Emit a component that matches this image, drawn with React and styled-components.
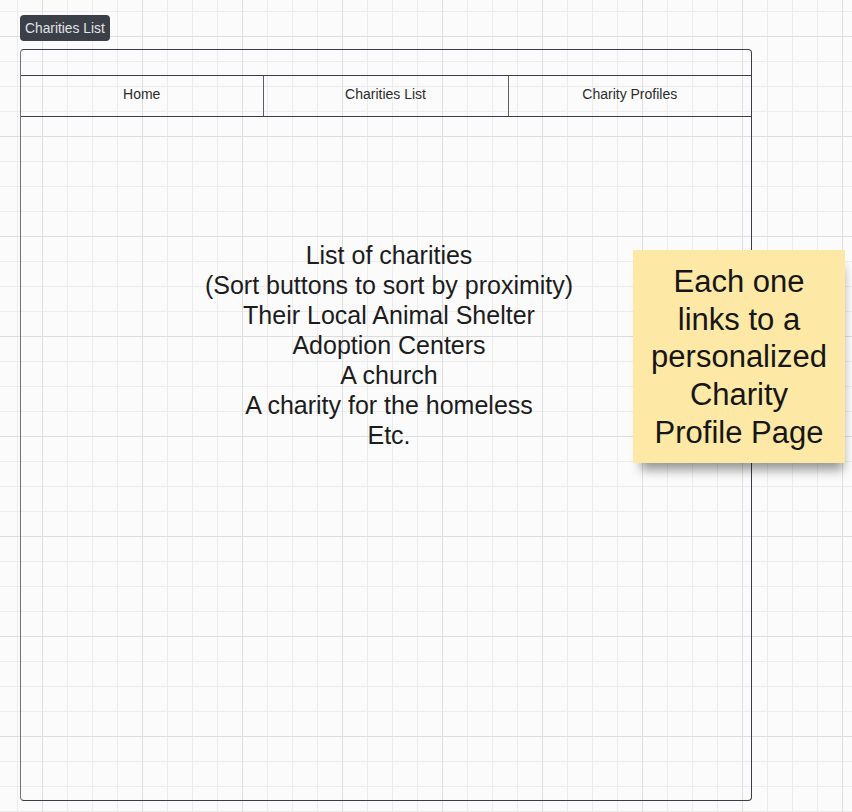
import * as React from 'react';
import styled, { createGlobalStyle } from 'styled-components';

const GlobalStyle = createGlobalStyle`
  html, body {
    margin: 0;
    padding: 0;
  }
  body {
    font-family: 'Liberation Sans', Arial, sans-serif;
    background-color: #fbfbfb;
    background-image:
      linear-gradient(to right, #dedede 1px, transparent 1px),
      linear-gradient(to bottom, #dedede 1px, transparent 1px),
      linear-gradient(to right, #ececec 1px, transparent 1px),
      linear-gradient(to bottom, #ececec 1px, transparent 1px);
    background-size: 100px 100px, 100px 100px, 25px 25px, 25px 25px;
    background-position: 42px 36px, 42px 36px, 17px 11px, 17px 11px;
  }
`;

const Canvas = styled.div`
  position: relative;
  width: 852px;
  height: 812px;
  padding: 15px 0 0 20px;
  box-sizing: border-box;
`;

const Tag = styled.div`
  display: inline-block;
  height: 26px;
  line-height: 28px;
  padding: 0 5px 0 5px;
  box-sizing: border-box;
  background: #3b3f48;
  color: #e2e3e5;
  font-size: 13.8px;
  border-radius: 4px;
`;

const Frame = styled.div`
  margin-top: 8px;
  width: 732px;
  height: 752px;
  box-sizing: border-box;
  border: 1.5px solid #3a3e48;
  border-left-color: #6f727a;
  border-radius: 4px;
  display: flex;
  flex-direction: column;
`;

const TitleBar = styled.div`
  height: 25px;
  border-bottom: 1.5px solid #3a3e48;
`;

const Nav = styled.div`
  display: grid;
  grid-template-columns: 241.5px 245px 1fr;
  height: 40px;
  border-bottom: 1.5px solid #3a3e48;
`;

const NavItem = styled.div`
  display: flex;
  align-items: center;
  justify-content: center;
  padding-bottom: 5px;
  box-sizing: border-box;
  font-size: 14px;
  color: #2b2b2b;
  border-left: ${(p) => (p.first ? 'none' : '1.5px solid #5a5e66')};
`;

const Body = styled.div`
  flex: 1;
  display: flex;
  flex-direction: column;
  align-items: center;
  padding-top: 123px;
  padding-left: 6px;
`;

const Line = styled.div`
  font-size: 25px;
  line-height: 30px;
  color: #1c1c1c;
  text-align: center;
  white-space: nowrap;
`;

const Sticky = styled.div`
  position: absolute;
  left: 633px;
  top: 250px;
  width: 212px;
  height: 213px;
  box-sizing: border-box;
  padding-top: 13px;
  background: #fde8a5;
  box-shadow: 3px 12px 10px -5px rgba(0, 0, 0, 0.4);
  display: flex;
  flex-direction: column;
  align-items: center;
  font-size: 31px;
  line-height: 37.7px;
  color: #161616;
  text-align: center;
`;

const lines = [
  'List of charities',
  '(Sort buttons to sort by proximity)',
  'Their Local Animal Shelter',
  'Adoption Centers',
  'A church',
  'A charity for the homeless',
  'Etc.',
];

const App = () => (
  <>
    <GlobalStyle />
    <Canvas>
      <Tag>Charities List</Tag>
      <Frame>
        <TitleBar />
        <Nav>
          <NavItem first>Home</NavItem>
          <NavItem>Charities List</NavItem>
          <NavItem>Charity Profiles</NavItem>
        </Nav>
        <Body>
          {lines.map((l) => (
            <Line key={l}>{l}</Line>
          ))}
        </Body>
      </Frame>
      <Sticky>
        <div>Each one</div>
        <div>links to a</div>
        <div>personalized</div>
        <div>Charity</div>
        <div>Profile Page</div>
      </Sticky>
    </Canvas>
  </>
);

export default App;
